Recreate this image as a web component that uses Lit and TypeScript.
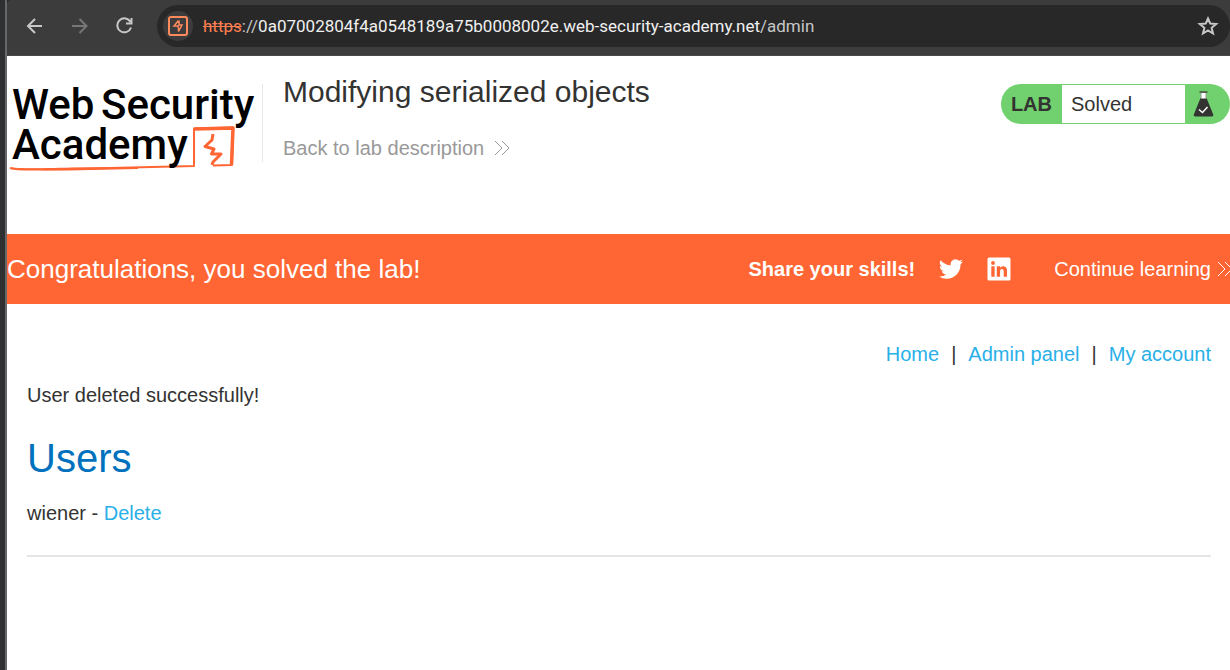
import { LitElement, html, css, svg } from "lit";
import { customElement } from "lit/decorators.js";

const chevrons = html`<svg class="chevrons" viewBox="0 0 16 16" width="16" height="16" aria-hidden="true">
  <path d="M1 1l7 7-7 7M8 1l7 7-7 7" fill="none" stroke="currentColor" stroke-width="1" />
</svg>`;

@customElement("browser-bar")
class BrowserBar extends LitElement {
  static styles = css`
    :host {
      display: flex;
      align-items: center;
      height: 56px;
      box-sizing: border-box;
      padding: 5px 0 9px 16px;
      background: #3c3c3c;
      border-bottom: 1px solid #484848;
      border-top-left-radius: 4px;
      color: #c7c7c7;
    }
    button {
      padding: 0;
      border: 0;
      background: none;
      color: inherit;
      display: grid;
      place-items: center;
      flex: none;
    }
    .nav {
      width: 24px;
      height: 24px;
      margin-right: 21px;
    }
    .nav:disabled {
      color: #777;
    }
    .address {
      flex: 1;
      min-width: 0;
      height: 42px;
      display: flex;
      align-items: center;
      box-sizing: border-box;
      margin-left: -1px;
      padding: 0 11px 0 6px;
      border-radius: 21px;
      background: #282828;
      font: 17px/24px "Roboto", sans-serif;
    }
    .site {
      width: 30px;
      height: 30px;
      border-radius: 50%;
      background: #3c3c3c;
      color: #ff8a5c;
    }
    .url {
      flex: 1;
      min-width: 0;
      margin-left: 10px;
      overflow: hidden;
      white-space: nowrap;
      color: #c7c7c7;
    }
    .scheme {
      color: #ff7f50;
      text-decoration: line-through;
    }
    .host {
      color: #f0f0f0;
    }
  `;
  render() {
    return html`
      <button class="nav" aria-label="Back">
        <svg width="18" height="18" viewBox="0 0 18 18" fill="none" stroke="currentColor" stroke-width="2">
          <path d="M16 9H2.500M9 2L2 9l7 7" />
        </svg>
      </button>
      <button class="nav" aria-label="Forward" disabled>
        <svg width="18" height="18" viewBox="0 0 18 18" fill="none" stroke="currentColor" stroke-width="2">
          <path d="M1 9h14M8.500 2l7 7-7 7" />
        </svg>
      </button>
      <button class="nav" aria-label="Reload">
        <svg width="18" height="18" viewBox="0 0 18 18" fill="none" stroke="currentColor" stroke-width="2">
          <path d="M14.500 5A7 7 0 1 0 15 10.500M15.500 1v5.500H10" />
        </svg>
      </button>
      <div class="address">
        <button class="site" aria-label="Site information">
          <svg width="20" height="20" viewBox="0 0 20 20" fill="none" stroke="currentColor">
            <rect x="1" y="1" width="18" height="18" rx="2" stroke-width="2" />
            <path d="M10.500 4.500L6 10h4v1.500M11 4.500V9h3l-3.500 6.500v-4" stroke-width="1.500" />
          </svg>
        </button>
        <span class="url"><span class="scheme">https</span>://<span class="host">0a07002804f4a0548189a75b0008002e.web-security-academy.net</span>/admin</span>
        <button aria-label="Bookmark this page">
          <svg width="22" height="22" viewBox="0 0 22 22" fill="none" stroke="currentColor" stroke-width="2">
            <path d="M11 3.500l2.200 5 6 .500-4.600 3.800 1.400 5.700L11 15.500l-5 3 1.400-5.700L2.800 9l6-.500z" />
          </svg>
        </button>
      </div>
    `;
  }
}

@customElement("academy-logo")
class AcademyLogo extends LitElement {
  static styles = css`
    :host {
      display: block;
    }
    svg {
      display: block;
      overflow: visible;
    }
    .word {
      font: 500 42px "Roboto", sans-serif;
      fill: #000;
    }
  `;
  render() {
    return html`<svg width="250" height="92" viewBox="0 0 250 92" role="img" aria-label="Web Security Academy">
      ${svg`
        <g fill="none" stroke="#ff6633" stroke-linejoin="round">
          <path d="M2 84C12 87 30 85 60 85L186 82L186 44.500L225 43.500L224 81L205 81.500" stroke-width="2" />
          <path d="M186 45L225 44L223.500 80.500" stroke-width="3.500" />
          <path d="M205 50L204 56L197 62.500L206 65L203.500 70L213 70L205 78L204 81" stroke-width="3" />
        </g>
        <path d="M1 83C10 85 40 84 70 83.500L130 83L130 85L60 86.500C30 86.500 10 86 1 83z" fill="#ff6633" />
        <text class="word" x="4" y="35">Web</text>
        <text class="word" x="93" y="35">Security</text>
        <text class="word" x="4" y="75">Academy</text>
      `}
    </svg>`;
  }
}

@customElement("lab-header")
class LabHeader extends LitElement {
  static styles = css`
    :host {
      display: flex;
      align-items: flex-start;
      justify-content: space-between;
      padding: 18px 0 58px 1px;
    }
    .brand {
      display: flex;
      align-items: flex-start;
    }
    academy-logo {
      padding-top: 10px;
    }
    .title {
      margin: 10px 0 0 4px;
      padding-left: 20px;
      border-left: 1px solid #e6e6e6;
      height: 78px;
    }
    h2 {
      margin: -10px 0 21px;
      font-size: 30px;
      line-height: 36px;
      font-weight: 400;
    }
    .back {
      display: flex;
      align-items: center;
      gap: 10px;
      line-height: 34px;
      color: #999;
      text-decoration: none;
    }
    .status {
      display: flex;
      align-items: center;
      box-sizing: border-box;
      height: 40px;
      margin-top: 10px;
      padding: 1px 0 1px 10px;
      border-radius: 20px;
      background: #70d16e;
    }
    .tag {
      font-weight: 700;
      margin-right: 10px;
    }
    .state {
      box-sizing: border-box;
      width: 123px;
      padding-left: 9px;
      line-height: 38px;
      background: #fff;
      margin: 0;
    }
    .flask {
      margin: 0 16px 0 8px;
    }
  `;
  render() {
    return html`
      <div class="brand">
        <academy-logo></academy-logo>
        <div class="title">
          <h2>Modifying serialized objects</h2>
          <a class="back" href="#">Back to lab description ${chevrons}</a>
        </div>
      </div>
      <div class="status">
        <span class="tag">LAB</span>
        <p class="state">Solved</p>
        <svg class="flask" width="21" height="26" viewBox="0 0 21 26" aria-hidden="true">
          <path d="M7.500 7h6l6.500 16q1 2.500-1.500 2.500h-16Q0 25.500 1 23z" fill="#333332" />
          <path d="M8 1.500h5v6H8z" fill="#fff" stroke="#999" stroke-width="1" />
          <path d="M6.500 1h8" stroke="#333332" stroke-width="1.200" />
          <path d="M6 18.500l3.500 3 5-5.500" fill="none" stroke="#fff" stroke-width="1.500" />
        </svg>
      </div>
    `;
  }
}

@customElement("solved-banner")
class SolvedBanner extends LitElement {
  static styles = css`
    :host {
      display: flex;
      align-items: center;
      justify-content: space-between;
      height: 70px;
      overflow: hidden;
      background: #ff6633;
      color: #fff;
      white-space: nowrap;
    }
    h4 {
      margin: 0;
      font-size: 26px;
      font-weight: 400;
    }
    .actions {
      display: flex;
      align-items: center;
      margin-right: -3px;
    }
    .share {
      font-weight: 700;
      margin-right: 24px;
    }
    a {
      color: inherit;
      text-decoration: none;
      display: flex;
      align-items: center;
    }
    .social {
      margin-right: 24px;
    }
    .next {
      gap: 6px;
      margin-left: 19px;
    }
    .chevrons {
      flex: none;
    }
  `;
  render() {
    return html`
      <h4>Congratulations, you solved the lab!</h4>
      <div class="actions">
        <span class="share">Share your skills!</span>
        <a class="social" href="#" aria-label="Share on Twitter">
          <svg width="24" height="24" viewBox="0 0 24 24" fill="currentColor">
            <path d="M23.950 4.570a10 10 0 0 1-2.820.770 4.960 4.960 0 0 0 2.160-2.720c-.950.550-2 .950-3.130 1.180a4.920 4.920 0 0 0-8.380 4.480C7.690 8.100 4.070 6.130 1.640 3.160a4.920 4.920 0 0 0 1.520 6.570 4.900 4.900 0 0 1-2.230-.610v.060a4.920 4.920 0 0 0 3.950 4.830 5 5 0 0 1-2.210.080 4.940 4.940 0 0 0 4.600 3.420A9.870 9.870 0 0 1 0 19.540a14 14 0 0 0 7.550 2.210c9.050 0 14-7.500 14-13.980 0-.210 0-.420-.020-.630a10 10 0 0 0 2.460-2.550z" />
          </svg>
        </a>
        <a class="social" href="#" aria-label="Share on LinkedIn">
          <svg width="24" height="24" viewBox="0 0 24 24" fill="currentColor">
            <path fill-rule="evenodd" d="M2 .500h20a1.500 1.500 0 0 1 1.500 1.500v20a1.500 1.500 0 0 1-1.500 1.500H2a1.500 1.500 0 0 1-1.500-1.500V2A1.500 1.500 0 0 1 2 .500zM4.300 9.300v10.500h3.300V9.300zM6 4.100a1.900 1.900 0 1 0 0 3.800 1.900 1.900 0 0 0 0-3.800zM9.800 9.300v10.500h3.300v-5.300c0-3.200 3.600-3.200 3.600 0v5.300H20v-6.500c0-4.800-5.200-5.200-6.900-2.500V9.300z" />
          </svg>
        </a>
        <a class="next" href="#">Continue learning ${chevrons}</a>
      </div>
    `;
  }
}

@customElement("app-root")
class AppRoot extends LitElement {
  static styles = css`
    :host {
      display: block;
      box-sizing: border-box;
      min-height: 100vh;
      padding-left: 5px;
      background: #2f3032;
      font: 20px/24px "Liberation Sans", Arial, sans-serif;
      color: #333332;
    }
    .window {
      min-height: 100vh;
      box-sizing: border-box;
      border-left: 2px solid #686868;
      background: #fff;
    }
    .top {
      background: #242424;
    }
    main {
      padding: 38px 19px 0 20px;
    }
    nav {
      display: flex;
      justify-content: flex-end;
      gap: 12px;
    }
    a {
      color: #29b0e8;
      text-decoration: none;
    }
    p {
      margin: 0;
    }
    .notice {
      margin-top: 17px;
    }
    h1 {
      margin: 27px 0 19px;
      font-size: 40px;
      line-height: 48px;
      font-weight: 400;
      color: #0071bd;
    }
    hr {
      margin: 30px 0 0;
      border: 0;
      border-top: 2px solid #e5e5e5;
    }
  `;
  render() {
    return html`
      <div class="window">
        <div class="top"><browser-bar></browser-bar></div>
        <lab-header></lab-header>
        <solved-banner></solved-banner>
        <main>
          <nav>
            <a href="#">Home</a><span>|</span>
            <a href="#">Admin panel</a><span>|</span>
            <a href="#">My account</a>
          </nav>
          <p class="notice">User deleted successfully!</p>
          <h1>Users</h1>
          <p>wiener - <a href="#">Delete</a></p>
          <hr />
        </main>
      </div>
    `;
  }
}
